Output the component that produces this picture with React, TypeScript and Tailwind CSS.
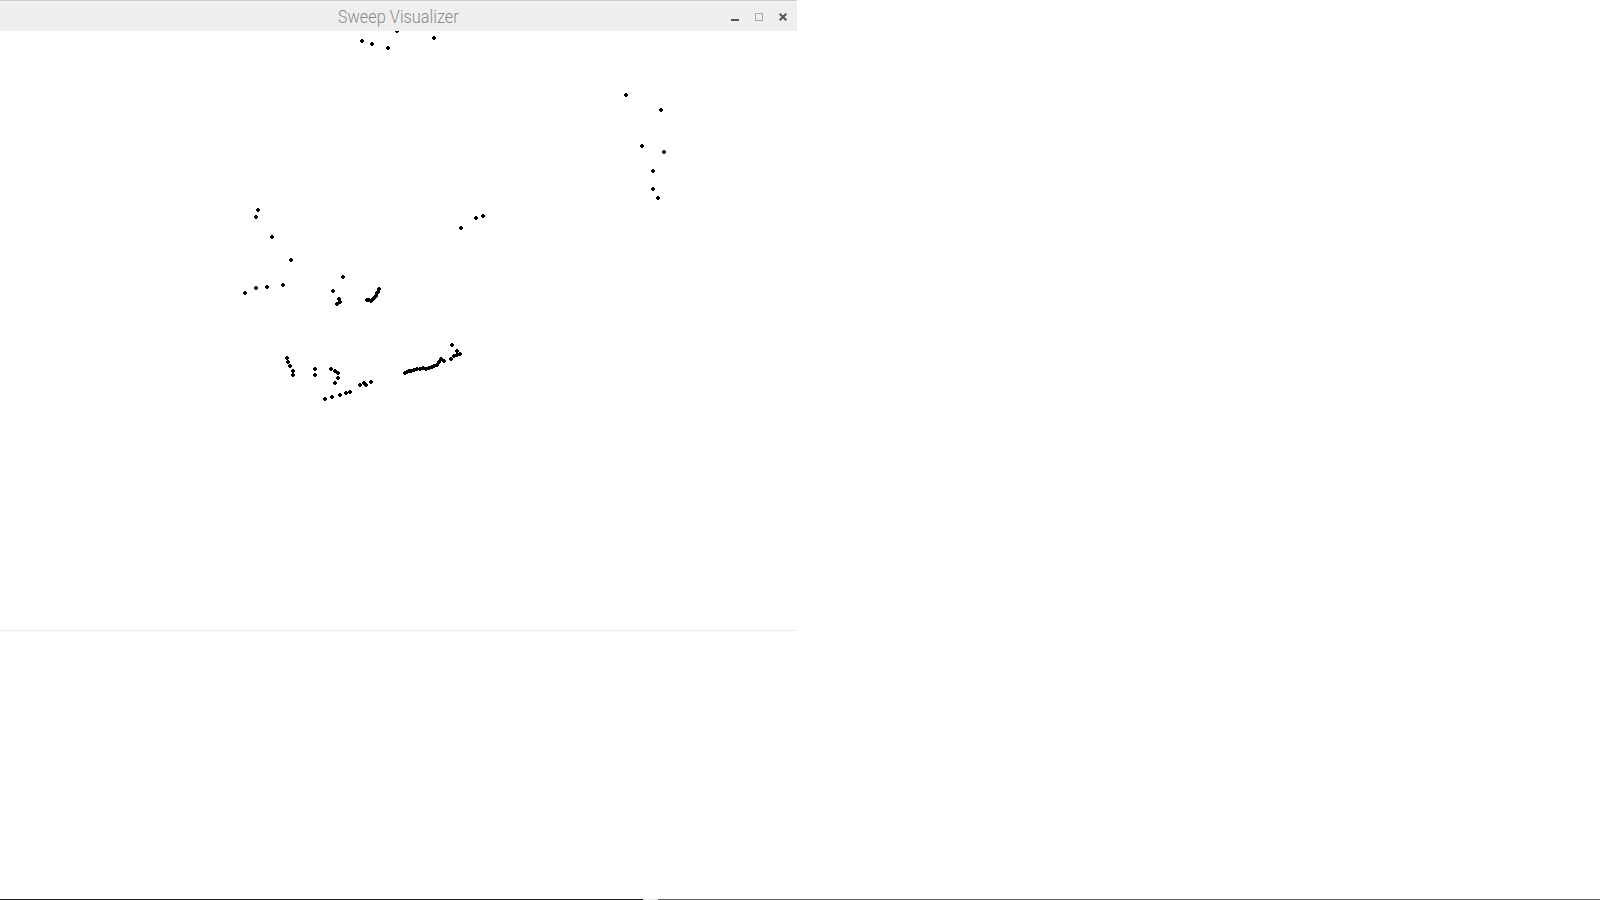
import React from "react";

// scan points, page coordinates (x, y)
const points: [number, number][] = [
  [396, 30], [361, 40], [371, 43], [387, 47], [433, 37],
  [625, 94], [660, 109], [641, 145], [663, 151], [652, 170], [652, 188], [657, 197],
  [257, 209], [255, 216], [271, 236], [290, 259],
  [244, 292], [255, 287], [266, 286], [282, 284],
  [342, 276], [332, 290], [338, 298], [339, 301], [336, 303],
  [366, 299], [368, 299], [370, 300], [371, 299], [373, 297], [374, 296], [375, 295], [376, 292], [377, 291], [378, 288],
  [460, 227], [475, 217], [482, 215],
  [286, 357], [287, 361], [289, 365], [292, 370], [292, 374],
  [314, 368], [314, 374],
  [330, 368], [334, 370], [337, 372], [337, 377], [334, 382],
  [324, 398], [331, 396], [339, 394], [345, 392], [349, 391],
  [359, 384], [363, 382], [365, 384], [370, 381],
  [404, 372], [406, 371], [408, 370], [410, 370], [413, 369], [416, 368], [419, 368], [422, 367],
  [425, 368], [428, 367], [431, 366], [433, 365], [436, 364], [438, 361], [440, 358], [443, 360],
  [451, 344], [450, 358], [453, 355], [456, 354], [456, 350], [459, 353],
];

const TOP = 31;

function SweepCanvas() {
  return (
    <svg width="797" height="599" viewBox="0 0 797 599" shapeRendering="crispEdges" className="block">
      {points.map(([x, y], i) => (
        <g key={i} fill="#000">
          <rect x={x - 1} y={y - TOP} width="4" height="2" />
          <rect x={x} y={y - TOP - 1} width="2" height="4" />
        </g>
      ))}
    </svg>
  );
}

function TitleBar() {
  return (
    <div className="h-[31px] border-t border-[#cdcdcd] bg-[#efefef] grid grid-cols-[1fr_auto_1fr] items-center">
      <div />
      <span
        className="text-[19px] font-light text-[#8a8a8a] leading-none scale-x-[0.86] whitespace-nowrap"
        style={{ fontFamily: "Roboto, 'Liberation Sans', sans-serif" }}
      >
        Sweep Visualizer
      </span>
      <div className="flex justify-end items-center gap-[16px] pr-[10px] pt-[2px]">
        <svg width="8" height="8" viewBox="0 0 8 8" shapeRendering="crispEdges">
          <rect x="0" y="6" width="8" height="2" fill="#555" />
        </svg>
        <svg width="8" height="8" viewBox="0 0 8 8" shapeRendering="crispEdges">
          <rect x="0.5" y="0.5" width="7" height="7" fill="none" stroke="#aaa" />
        </svg>
        <svg width="8" height="8" viewBox="0 0 8 8">
          <path d="M0.7 0.7 L7.3 7.3 M7.3 0.7 L0.7 7.3" stroke="#555" strokeWidth="2" />
        </svg>
      </div>
    </div>
  );
}

export default function App() {
  return (
    <div className="w-[1600px] h-[900px] bg-white flex flex-col overflow-hidden">
      <div className="w-[797px] flex flex-col">
        <TitleBar />
        <SweepCanvas />
        <div className="h-px bg-[#ebebeb]" />
      </div>
      <div className="flex-1" />
      <div className="h-px flex">
        <div className="w-[643px] bg-[#222]" />
        <div className="w-[15px] bg-[#e8e8e8]" />
        <div className="flex-1 bg-[#5a5a5a]" />
      </div>
    </div>
  );
}
